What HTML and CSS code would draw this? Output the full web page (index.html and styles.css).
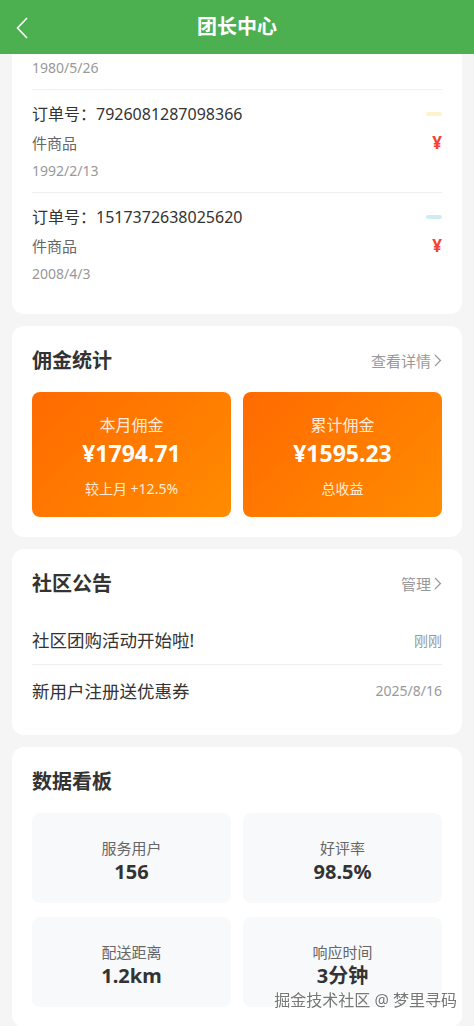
FILE: index.html
```html
<!DOCTYPE html>
<html lang="zh-CN">
<head>
    <meta charset="UTF-8">
    <meta name="viewport" content="width=device-width, initial-scale=1.0">
    <title>团长中心</title>
    <link rel="stylesheet" href="styles.css">
</head>
<body>
    <header class="navbar">
        <a class="nav-back" href="#">
            <svg width="12" height="22" viewBox="0 0 12 22"><path d="M11 1 L1.5 11 L11 21" fill="none" stroke="#fff" stroke-width="1.6"/></svg>
        </a>
        <h1 class="nav-title">团长中心</h1>
    </header>

    <main class="page">
        <section class="card">
            <div class="card-head">
                <h2 class="card-title">最近订单</h2>
                <a class="more" href="#">全部订单<svg width="8" height="13" viewBox="0 0 8 13"><path d="M1 1 L6.5 6.5 L1 12" fill="none" stroke="#999" stroke-width="1.2"/></svg></a>
            </div>
            <ul class="order-list">
                <li class="order">
                    <div class="order-row">
                        <span class="order-no">订单号：3051947726180432</span>
                        <span class="badge badge-done"></span>
                    </div>
                    <div class="order-row order-row-goods">
                        <span class="order-goods">件商品</span>
                        <span class="order-price">¥</span>
                    </div>
                    <div class="order-date" id="firstDate">1980/5/26</div>
                </li>
                <li class="order">
                    <div class="order-row">
                        <span class="order-no">订单号：7926081287098366</span>
                        <span class="badge badge-wait"></span>
                    </div>
                    <div class="order-row order-row-goods">
                        <span class="order-goods">件商品</span>
                        <span class="order-price">¥</span>
                    </div>
                    <div class="order-date">1992/2/13</div>
                </li>
                <li class="order">
                    <div class="order-row">
                        <span class="order-no">订单号：1517372638025620</span>
                        <span class="badge badge-done"></span>
                    </div>
                    <div class="order-row order-row-goods">
                        <span class="order-goods">件商品</span>
                        <span class="order-price">¥</span>
                    </div>
                    <div class="order-date">2008/4/3</div>
                </li>
            </ul>
        </section>

        <section class="card">
            <div class="card-head">
                <h2 class="card-title">佣金统计</h2>
                <a class="more" href="#">查看详情<svg width="8" height="13" viewBox="0 0 8 13"><path d="M1 1 L6.5 6.5 L1 12" fill="none" stroke="#999" stroke-width="1.2"/></svg></a>
            </div>
            <div class="commission">
                <div class="commission-box">
                    <div class="commission-label">本月佣金</div>
                    <div class="commission-value">¥1794.71</div>
                    <div class="commission-sub">较上月 +12.5%</div>
                </div>
                <div class="commission-box">
                    <div class="commission-label">累计佣金</div>
                    <div class="commission-value">¥1595.23</div>
                    <div class="commission-sub">总收益</div>
                </div>
            </div>
        </section>

        <section class="card">
            <div class="card-head">
                <h2 class="card-title">社区公告</h2>
                <a class="more" href="#">管理<svg width="8" height="13" viewBox="0 0 8 13"><path d="M1 1 L6.5 6.5 L1 12" fill="none" stroke="#999" stroke-width="1.2"/></svg></a>
            </div>
            <ul class="notice-list">
                <li class="notice">
                    <span class="notice-text">社区团购活动开始啦!</span>
                    <span class="notice-time">刚刚</span>
                </li>
                <li class="notice">
                    <span class="notice-text">新用户注册送优惠券</span>
                    <span class="notice-time">2025/8/16</span>
                </li>
            </ul>
        </section>

        <section class="card">
            <div class="card-head">
                <h2 class="card-title">数据看板</h2>
            </div>
            <div class="stats">
                <div class="stat">
                    <div class="stat-label">服务用户</div>
                    <div class="stat-value">156</div>
                </div>
                <div class="stat">
                    <div class="stat-label">好评率</div>
                    <div class="stat-value">98.5%</div>
                </div>
                <div class="stat">
                    <div class="stat-label">配送距离</div>
                    <div class="stat-value">1.2km</div>
                </div>
                <div class="stat">
                    <div class="stat-label">响应时间</div>
                    <div class="stat-value">3分钟</div>
                </div>
            </div>
        </section>
    </main>

    <div class="watermark">掘金技术社区 @ 梦里寻码</div>

    <script>
        // 页面滚动到订单列表中间的位置
        const firstDate = document.getElementById("firstDate");
        const dateTop = firstDate.getBoundingClientRect().top + window.scrollY;
        window.scrollTo(0, dateTop - 59);
    </script>
</body>
</html>
```

FILE: styles.css
```css
* {
    box-sizing: border-box;
}

body {
    margin: 0;
    background-color: #f5f5f5;
    color: #333;
    font-family: "Noto Sans", "Noto Sans CJK SC", sans-serif;
}

ul {
    margin: 0;
    padding: 0;
    list-style: none;
}

a {
    text-decoration: none;
}

.navbar {
    position: fixed;
    top: 0;
    left: 0;
    right: 0;
    z-index: 10;
    height: 54px;
    display: flex;
    align-items: center;
    justify-content: center;
    background-color: #4caf50;
}

.nav-back {
    position: absolute;
    left: 16px;
    top: 17px;
    display: flex;
}

.nav-title {
    margin: 0;
    color: #fff;
    font-size: 20px;
    font-weight: bold;
    line-height: 26px;
}

.page {
    display: flex;
    flex-direction: column;
    gap: 12px;
    padding: 66px 12px 12px;
}

.card {
    background-color: #fff;
    border-radius: 12px;
    padding: 20px;
}

.card-head {
    display: flex;
    align-items: center;
    justify-content: space-between;
    height: 29px;
}

.card-title {
    margin: 0;
    font-size: 20px;
    font-weight: bold;
    line-height: 28px;
    color: #333;
}

.more {
    display: flex;
    align-items: center;
    gap: 3px;
    color: #999;
    font-size: 15px;
}

/* 订单 */
.order-list {
    margin-top: 10px;
}

.order {
    padding: 13px 0 12px;
    border-bottom: 1px solid #f0f0f0;
}

.order:last-child {
    padding-bottom: 11px;
    border-bottom: none;
}

.order-row {
    display: flex;
    align-items: center;
    justify-content: space-between;
    height: 22px;
}

.order-row-goods {
    height: 20px;
    margin-top: 8px;
}

.order-no {
    font-size: 16px;
    line-height: 22px;
    color: #333;
}

.order-goods {
    font-size: 15px;
    line-height: 20px;
    color: #666;
}

.order-price {
    color: #f44336;
    font-size: 17px;
    font-weight: bold;
    line-height: 20px;
}

.order-date {
    height: 18px;
    margin-top: 9px;
    font-size: 14px;
    line-height: 18px;
    color: #999;
}

.badge {
    display: inline-block;
    padding: 2px 8px;
    border-radius: 4px;
}

.badge-wait {
    background-color: #fff3cd;
}

.badge-done {
    background-color: #d1ecf1;
}

/* 佣金 */
.commission {
    display: grid;
    grid-template-columns: 1fr 1fr;
    gap: 12px;
    margin-top: 17px;
}

.commission-box {
    height: 125px;
    padding-top: 23px;
    border-radius: 8px;
    text-align: center;
    color: #fff;
    background: linear-gradient(135deg, #ff6a00, #ff8c00);
}

.commission-label {
    height: 20px;
    font-size: 16px;
    line-height: 20px;
    opacity: 0.85;
}

.commission-value {
    height: 30px;
    margin-top: 3px;
    font-size: 23px;
    font-weight: bold;
    line-height: 30px;
}

.commission-sub {
    height: 18px;
    margin-top: 12px;
    font-size: 14px;
    line-height: 18px;
    opacity: 0.85;
}

/* 公告 */
.notice-list {
    margin-top: 17px;
}

.notice {
    display: flex;
    align-items: center;
    justify-content: space-between;
    height: 50px;
    border-bottom: 1px solid #f0f0f0;
}

.notice:last-child {
    border-bottom: none;
}

.notice-text {
    font-size: 17.5px;
    color: #333;
}

.notice-time {
    font-size: 14px;
    color: #999;
}

/* 数据看板 */
.stats {
    display: grid;
    grid-template-columns: 1fr 1fr;
    gap: 14px 12px;
    margin-top: 17px;
}

.stat {
    height: 90px;
    padding-top: 25px;
    border-radius: 8px;
    text-align: center;
    background-color: #f8f9fa;
}

.stat-label {
    height: 20px;
    font-size: 15px;
    line-height: 20px;
    color: #666;
}

.stat-value {
    height: 26px;
    margin-top: 1px;
    font-size: 20px;
    font-weight: bold;
    line-height: 26px;
    color: #333;
}

.watermark {
    position: fixed;
    right: 17px;
    bottom: 15px;
    z-index: 20;
    font-size: 16px;
    line-height: 22px;
    color: #777;
    text-shadow: 0 0 2px #fff, 0 0 2px #fff, 0 0 3px #fff;
}
```
